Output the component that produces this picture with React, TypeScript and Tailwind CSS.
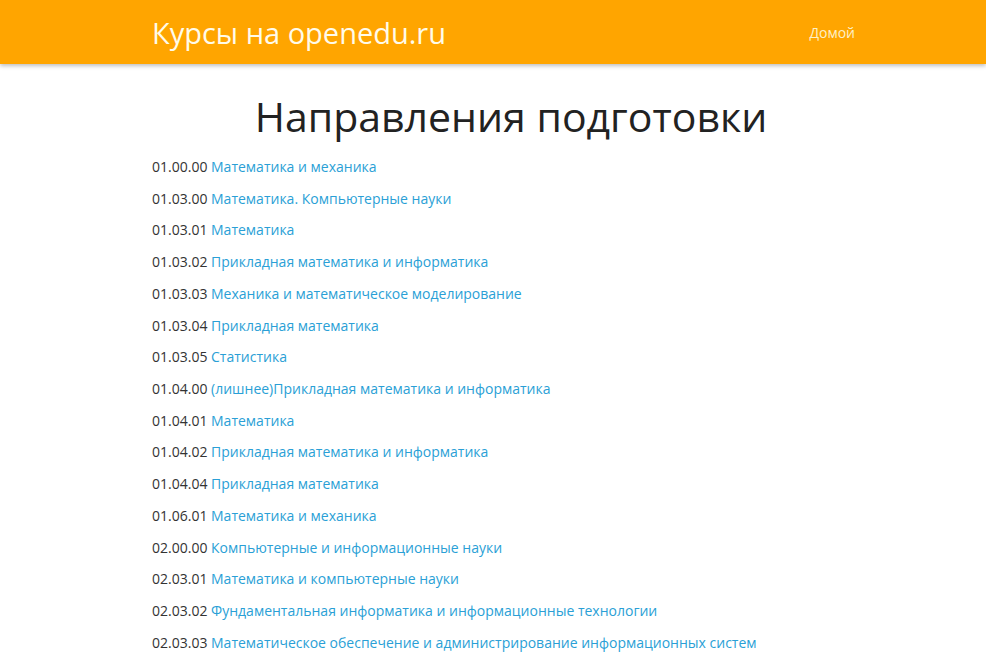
import React from 'react';

const items: [string, string][] = [
  ['01.00.00', 'Математика и механика'],
  ['01.03.00', 'Математика. Компьютерные науки'],
  ['01.03.01', 'Математика'],
  ['01.03.02', 'Прикладная математика и информатика'],
  ['01.03.03', 'Механика и математическое моделирование'],
  ['01.03.04', 'Прикладная математика'],
  ['01.03.05', 'Статистика'],
  ['01.04.00', '(лишнее)Прикладная математика и информатика'],
  ['01.04.01', 'Математика'],
  ['01.04.02', 'Прикладная математика и информатика'],
  ['01.04.04', 'Прикладная математика'],
  ['01.06.01', 'Математика и механика'],
  ['02.00.00', 'Компьютерные и информационные науки'],
  ['02.03.01', 'Математика и компьютерные науки'],
  ['02.03.02', 'Фундаментальная информатика и информационные технологии'],
  ['02.03.03', 'Математическое обеспечение и администрирование информационных систем'],
];

export default function App() {
  return (
    <div className="min-h-screen bg-white text-[#333] font-['Open_Sans',sans-serif]">
      <header className="h-[64px] bg-[#ffa500] shadow-[0_2px_4px_rgba(0,0,0,0.25)]">
        <div className="ml-[152px] w-[703px] h-full flex items-center justify-between">
          <a href="#" className="text-[29px] text-[#fffbea] leading-none">Курсы на openedu.ru</a>
          <a href="#" className="text-[14px] text-[#fdf0c8] leading-none mt-[2px]">Домой</a>
        </div>
      </header>
      <main className="ml-[152px] w-[718px]">
        <h1 className="text-center text-[41px] text-[#222] leading-none mt-[32px] mb-[14px]">Направления подготовки</h1>
        <ul>
          {items.map(([code, name]) => (
            <li key={code + name} className="text-[14px] leading-[31.73px] h-[31.73px] whitespace-nowrap">
              {code}{' '}
              <a href="#" className="text-[#2a9fd6]">{name}</a>
            </li>
          ))}
        </ul>
      </main>
    </div>
  );
}
